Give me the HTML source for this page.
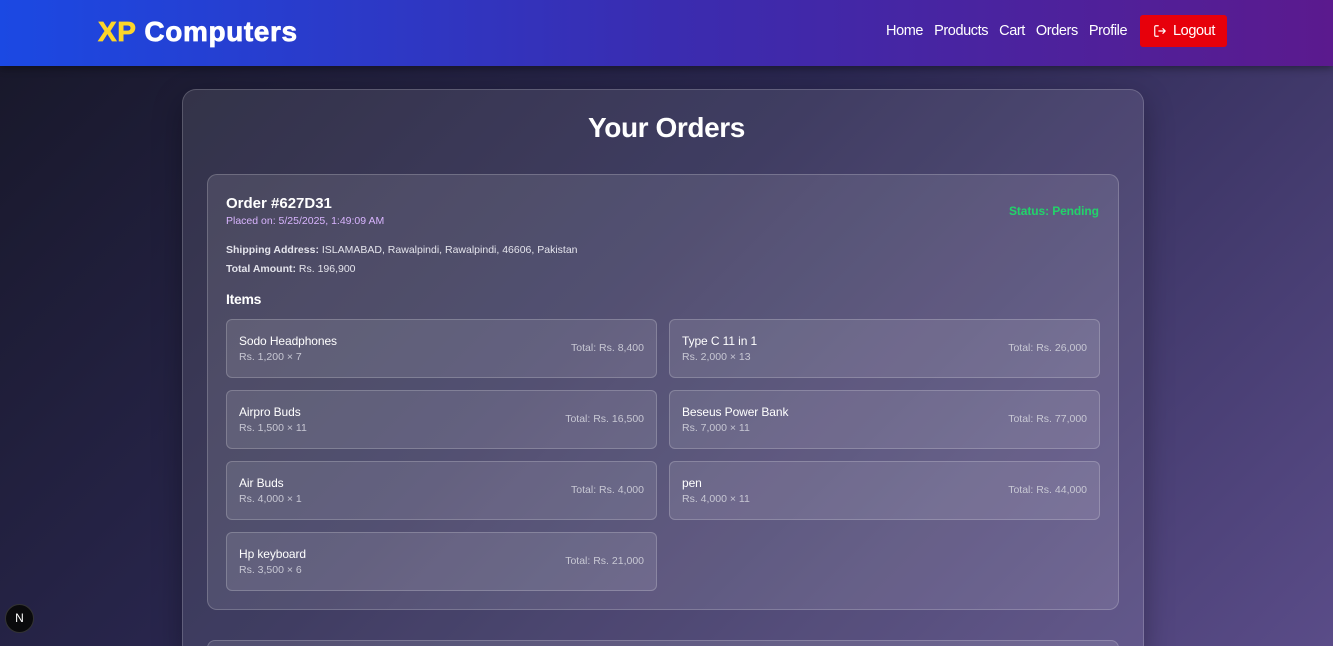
<!DOCTYPE html>
<html style="overflow:hidden;width:1333px;height:646px"><head><style>
*{box-sizing:border-box;margin:0;padding:0}
body{width:1333px;height:646px;overflow:hidden;font-family:"Liberation Sans",sans-serif;color:#fff;background:linear-gradient(135deg,#171728 0%,#2a2750 45%,#5a4c88 100%);position:relative}
.hdr{position:absolute;left:0;top:0;width:1333px;height:66px;background:linear-gradient(90deg,#1b49e3 0%,#3a2cb0 50%,#5b1a8e 100%);box-shadow:0 2px 8px rgba(0,0,0,.4);z-index:2}
.logo{position:absolute;left:98px;top:16px;font-size:28px;font-weight:bold;letter-spacing:.6px;-webkit-text-stroke:.7px currentColor}
.logo span{color:#fcd52a}
.nav{position:absolute;left:886px;top:23px;font-size:14.5px;display:flex;gap:11px;letter-spacing:-.4px}
.btn{position:absolute;left:1140px;top:15px;width:87px;height:32px;background:#e7000b;border-radius:3px;font-size:14.5px;padding:8px 0 0 33px;letter-spacing:-.4px}
.btn svg{position:absolute;left:13px;top:9px}
.main{position:absolute;left:182px;top:89px;width:962px;height:570px;border-radius:14px;background:rgba(255,255,255,.1);border:1px solid rgba(255,255,255,.18);box-shadow:0 10px 30px rgba(0,0,0,.3)}
h1{position:absolute;left:0;width:100%;top:112px;text-align:center;font-size:28px;font-weight:bold;letter-spacing:-.4px}
.card{position:absolute;left:207px;top:174px;width:912px;height:436px;border-radius:10px;background:rgba(255,255,255,.1);border:1px solid rgba(255,255,255,.2)}
.card2{position:absolute;left:207px;top:640px;width:912px;height:16px;border-radius:10px;background:rgba(255,255,255,.1);border:1px solid rgba(255,255,255,.2)}
.t{position:absolute;white-space:nowrap}
.item{position:absolute;width:431px;height:59px;border-radius:6px;background:rgba(255,255,255,.1);border:1px solid rgba(255,255,255,.2)}
.item .n{position:absolute;left:12px;top:14px;font-size:12px;color:#fff;letter-spacing:-.1px}
.item .p{position:absolute;left:12px;top:31px;font-size:10.5px;color:#c8c8d4}
.item .tt{position:absolute;right:12px;top:22px;font-size:10.5px;color:#c8c8d4}
.nx{position:absolute;left:5px;top:604px;width:29px;height:29px;border-radius:50%;background:#0a0a0c;border:1px solid #333;color:#fff;font-size:12px;text-align:center;line-height:27px}
</style></head><body>
<div class="hdr">
<div class="logo"><span>XP</span> Computers</div>
<div class="nav"><span>Home</span><span>Products</span><span>Cart</span><span>Orders</span><span>Profile</span></div>
<div class="btn"><svg width="14" height="14" viewBox="0 0 24 24" fill="none" stroke="#fff" stroke-width="2" stroke-linecap="round" stroke-linejoin="round"><path d="M9 21H5a2 2 0 0 1-2-2V5a2 2 0 0 1 2-2h4"/><path d="M10 12h11M17 8l4 4-4 4"/></svg>Logout</div>
</div>
<div class="main"></div>
<h1>Your Orders</h1>
<div class="card"></div>
<div class="card2"></div>
<div class="t" style="left:226px;top:195px;font-size:15px;font-weight:bold">Order #627D31</div>
<div class="t" style="left:226px;top:215px;font-size:10.5px;color:#d8b4fe">Placed on: 5/25/2025, 1:49:09 AM</div>
<div class="t" style="left:1009px;top:204px;font-size:12px;font-weight:bold;color:#22d36a;letter-spacing:-.1px">Status: Pending</div>
<div class="t" style="left:226px;top:244px;font-size:10.5px;color:#e4e4ec"><b>Shipping Address:</b> ISLAMABAD, Rawalpindi, Rawalpindi, 46606, Pakistan</div>
<div class="t" style="left:226px;top:263px;font-size:10.5px;color:#e4e4ec"><b>Total Amount:</b> Rs. 196,900</div>
<div class="t" style="left:226px;top:291px;font-size:14px;font-weight:bold;letter-spacing:-.3px">Items</div>
<div class="item" style="left:226px;top:319px"><div class="n">Sodo Headphones</div><div class="p">Rs. 1,200 × 7</div><div class="tt">Total: Rs. 8,400</div></div>
<div class="item" style="left:669px;top:319px"><div class="n">Type C 11 in 1</div><div class="p">Rs. 2,000 × 13</div><div class="tt">Total: Rs. 26,000</div></div>
<div class="item" style="left:226px;top:390px"><div class="n">Airpro Buds</div><div class="p">Rs. 1,500 × 11</div><div class="tt">Total: Rs. 16,500</div></div>
<div class="item" style="left:669px;top:390px"><div class="n">Beseus Power Bank</div><div class="p">Rs. 7,000 × 11</div><div class="tt">Total: Rs. 77,000</div></div>
<div class="item" style="left:226px;top:461px"><div class="n">Air Buds</div><div class="p">Rs. 4,000 × 1</div><div class="tt">Total: Rs. 4,000</div></div>
<div class="item" style="left:669px;top:461px"><div class="n">pen</div><div class="p">Rs. 4,000 × 11</div><div class="tt">Total: Rs. 44,000</div></div>
<div class="item" style="left:226px;top:532px"><div class="n">Hp keyboard</div><div class="p">Rs. 3,500 × 6</div><div class="tt">Total: Rs. 21,000</div></div>
<div class="nx">N</div>
</body></html>
